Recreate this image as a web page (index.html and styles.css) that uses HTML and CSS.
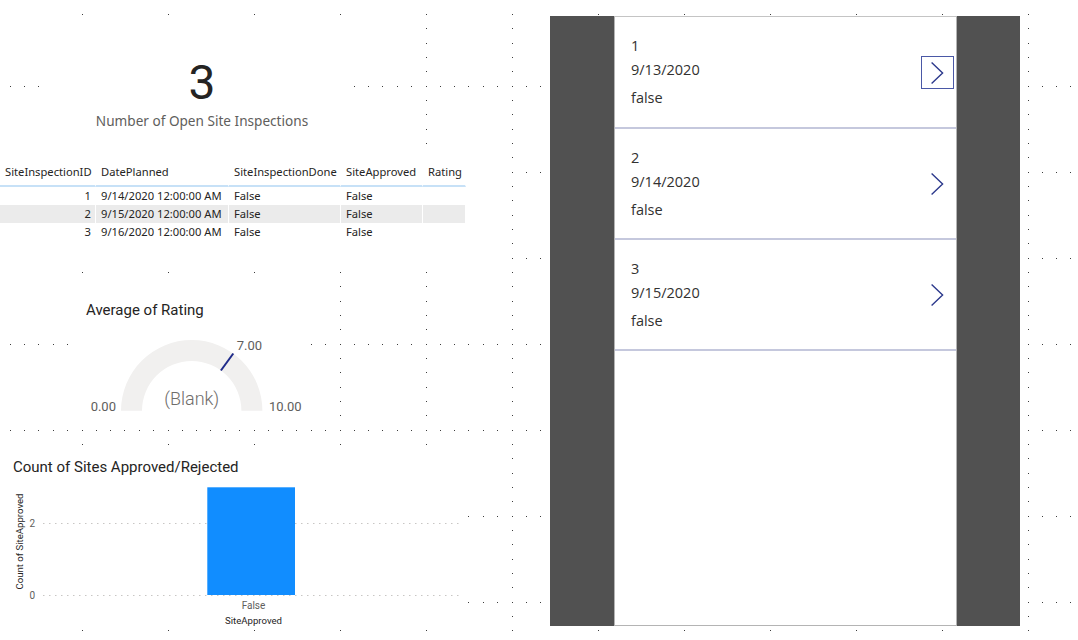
FILE: index.html
```html
<!DOCTYPE html>
<html lang="en">
<head>
<meta charset="utf-8">
<title>Site Inspections</title>
<link rel="stylesheet" href="styles.css">
</head>
<body>
<div class="canvas">
  <div class="report">
    <section class="card">
      <div class="card-value">3</div>
      <div class="card-label">Number of Open Site Inspections</div>
    </section>

    <section class="table-visual">
      <table class="data-table">
        <colgroup><col class="w1"><col class="w2"><col class="w3"><col class="w4"><col class="w5"></colgroup>
        <thead>
          <tr><th>SiteInspectionID</th><th>DatePlanned</th><th>SiteInspectionDone</th><th>SiteApproved</th><th>Rating</th></tr>
        </thead>
        <tbody>
          <tr><td class="num">1</td><td>9/14/2020 12:00:00 AM</td><td>False</td><td>False</td><td></td></tr>
          <tr class="alt"><td class="num">2</td><td>9/15/2020 12:00:00 AM</td><td>False</td><td>False</td><td></td></tr>
          <tr><td class="num">3</td><td>9/16/2020 12:00:00 AM</td><td>False</td><td>False</td><td></td></tr>
        </tbody>
      </table>
    </section>

    <section class="gauge">
      <h2 class="visual-title">Average of Rating</h2>
      <svg class="gauge-svg" width="232" height="105" viewBox="0 0 232 105">
        <path class="gauge-track" d="M47 91.7 A70.7 70.7 0 0 1 188.4 91.7 L167.4 91.7 A49.7 49.7 0 0 0 68 91.7 Z"/>
        <line class="gauge-target" x1="146.9" y1="51.5" x2="159.3" y2="34.5"/>
        <text class="gauge-tick" x="42" y="91.6" text-anchor="end">0.00</text>
        <text class="gauge-tick" x="195" y="91.6">10.00</text>
        <text class="gauge-tick" x="162.7" y="30.6">7.00</text>
        <text class="gauge-value" x="117.7" y="86" text-anchor="middle">(Blank)</text>
      </svg>
    </section>

    <section class="chart">
      <h2 class="visual-title chart-title">Count of Sites Approved/Rejected</h2>
      <svg class="chart-svg" width="460" height="150" viewBox="0 0 460 150">
        <text class="axis-title" transform="translate(23.2 64.5) rotate(-90)" text-anchor="middle">Count of SiteApproved</text>
        <line class="gridline" x1="43" y1="46.5" x2="460" y2="46.5"/>
        <line class="gridline" x1="43" y1="118.5" x2="460" y2="118.5"/>
        <text class="axis-label" x="35" y="49.5" text-anchor="end">2</text>
        <text class="axis-label" x="35" y="121.5" text-anchor="end">0</text>
        <rect class="bar" x="207.3" y="10.3" width="87.7" height="107.7"/>
        <text class="axis-label" x="253.5" y="131.8" text-anchor="middle">False</text>
        <text class="axis-title" x="253.5" y="147.3" text-anchor="middle">SiteApproved</text>
      </svg>
    </section>
  </div>

  <div class="app">
    <div class="app-side"></div>
    <div class="gallery">
      <div class="item">
        <div class="item-text">
          <div class="item-id">1</div>
          <div class="item-date">9/13/2020</div>
          <div class="item-flag">false</div>
        </div>
        <div class="next selected">
          <svg width="31" height="31" viewBox="1 1 31 31"><polyline points="10.6,6.4 21.6,17 10.6,27.4"/></svg>
        </div>
      </div>
      <div class="item">
        <div class="item-text">
          <div class="item-id">2</div>
          <div class="item-date">9/14/2020</div>
          <div class="item-flag">false</div>
        </div>
        <div class="next">
          <svg width="31" height="31" viewBox="1 1 31 31"><polyline points="10.6,6.4 21.6,17 10.6,27.4"/></svg>
        </div>
      </div>
      <div class="item">
        <div class="item-text">
          <div class="item-id">3</div>
          <div class="item-date">9/15/2020</div>
          <div class="item-flag">false</div>
        </div>
        <div class="next">
          <svg width="31" height="31" viewBox="1 1 31 31"><polyline points="10.6,6.4 21.6,17 10.6,27.4"/></svg>
        </div>
      </div>
    </div>
    <div class="app-side"></div>
  </div>
</div>
</body>
</html>
```

FILE: styles.css
```css
:root {
  --dot: conic-gradient(from 270deg at 1px 1px, #3c3c3c 90deg, transparent 0);
}

html, body {
  margin: 0;
  padding: 0;
  background: #fff;
}

body {
  font-family: "Noto Sans", "Open Sans", sans-serif;
  color: #252423;
}

.canvas {
  box-sizing: border-box;
  width: 1078px;
  height: 640px;
  overflow: hidden;
  display: flex;
  align-items: flex-start;
  border-top: 1px solid #fff;
  background-color: #fff;
  background-image:
    var(--dot), var(--dot), var(--dot), var(--dot), var(--dot), var(--dot),
    var(--dot), var(--dot), var(--dot), var(--dot), var(--dot);
  background-size: 86px 86px;
  background-origin: border-box;
  background-clip: padding-box;
  background-position:
    82px 0, 82px 14px, 82px 28px, 82px 43px, 82px 57px, 82px 71px,
    10px 0, 24px 0, 38px 0, 53px 0, 67px 0;
}

/* ---------- Report (left) ---------- */
.report {
  width: 505px;
  flex: none;
  display: flex;
  flex-direction: column;
}

.card {
  margin: 19px 0 0 52px;
  width: 300px;
  height: 126px;
  background: #fff;
  display: flex;
  flex-direction: column;
  align-items: center;
}

.card-value {
  margin-top: 39px;
  font-family: Roboto, sans-serif;
  font-size: 48px;
  line-height: 48px;
  color: #252423;
}

.card-label {
  margin-top: 4px;
  font-size: 13.6px;
  line-height: 20px;
  color: #605e5c;
}

.table-visual {
  width: 505px;
  height: 120px;
  background: #fff;
}

.data-table {
  margin-top: 13px;
  width: 466px;
  table-layout: fixed;
  border-collapse: separate;
  border-spacing: 0;
  font-size: 11.2px;
  color: #252423;
}

.w1 { width: 96px; }
.w2 { width: 133px; }
.w3 { width: 112px; }
.w4 { width: 82px; }
.w5 { width: 43px; }

.data-table th,
.data-table td {
  padding: 0 4px 0 5px;
  border-right: 1px solid #fff;
  white-space: nowrap;
  overflow: hidden;
  text-align: left;
  font-weight: 400;
}

.data-table th {
  line-height: 26px;
  border-bottom: 2px solid #c7e1f7;
}

.data-table td {
  line-height: 18px;
}

.data-table td.num {
  text-align: right;
}

.data-table tr.alt td {
  background: #ebebeb;
}

.visual-title {
  margin: 0;
  font-family: Roboto, sans-serif;
  font-size: 15px;
  font-weight: 400;
  line-height: 20px;
  color: #252423;
}

.gauge {
  margin: 9px 0 0 74px;
  width: 232px;
  height: 149px;
  background: #fff;
  display: flex;
  flex-direction: column;
}

.gauge .visual-title {
  padding: 25px 0 0 12px;
}

.gauge-svg {
  display: block;
  margin-top: -1px;
}

.gauge-track {
  fill: #f1f0ef;
}

.gauge-target {
  stroke: #1f2b8a;
  stroke-width: 2;
}

.gauge-tick {
  font-family: Roboto, sans-serif;
  font-size: 13px;
  fill: #605e5c;
}

.gauge-value {
  font-family: Roboto, sans-serif;
  font-size: 18px;
  font-weight: 300;
  fill: #6f6d6b;
}

.chart {
  margin-top: 23px;
  width: 460px;
  height: 180px;
  background: #fff;
  display: flex;
  flex-direction: column;
}

.chart-title {
  padding: 10px 0 0 13px;
}

.chart-svg {
  display: block;
}

.axis-title {
  font-family: Roboto, sans-serif;
  font-size: 9.6px;
  fill: #252423;
}

.axis-label {
  font-family: Roboto, sans-serif;
  font-size: 10px;
  fill: #605e5c;
}

.gridline {
  stroke: #c8c6c4;
  stroke-width: 1;
  stroke-dasharray: 1.5 4.5;
}

.bar {
  fill: #118dff;
}

/* ---------- Power Apps panel (right) ---------- */
.app {
  margin: 15px 0 0 45px;
  width: 470px;
  height: 610px;
  flex: none;
  display: flex;
}

.app-side {
  width: 64px;
  background: #515151;
}

.app-side:last-child {
  width: 63px;
}

.gallery {
  box-sizing: border-box;
  width: 343px;
  background: #fff;
  border: 1px solid #b4b4b4;
  border-top-color: #c4c4c4;
  font-family: "Open Sans", "Noto Sans", sans-serif;
  font-size: 14.5px;
  color: #323130;
}

.item {
  box-sizing: border-box;
  height: 111px;
  border-bottom: 2px solid #c5c8dd;
  display: flex;
  align-items: center;
  padding: 0 2px 0 16px;
}

.item:first-child {
  height: 112px;
}

.item-text {
  flex: 1;
  align-self: flex-start;
  padding-top: 18.5px;
}

.item-id {
  line-height: 20px;
}

.item-date {
  margin-top: 2.5px;
  line-height: 24px;
}

.item-flag {
  margin-top: 3.5px;
  line-height: 24px;
}

.next {
  box-sizing: border-box;
  width: 33px;
  height: 33px;
  border: 1px solid transparent;
}

.next.selected {
  border-color: #4a58a6;
}

.next svg {
  display: block;
}

.next polyline {
  fill: none;
  stroke: #2c398c;
  stroke-width: 1.4;
}
```
